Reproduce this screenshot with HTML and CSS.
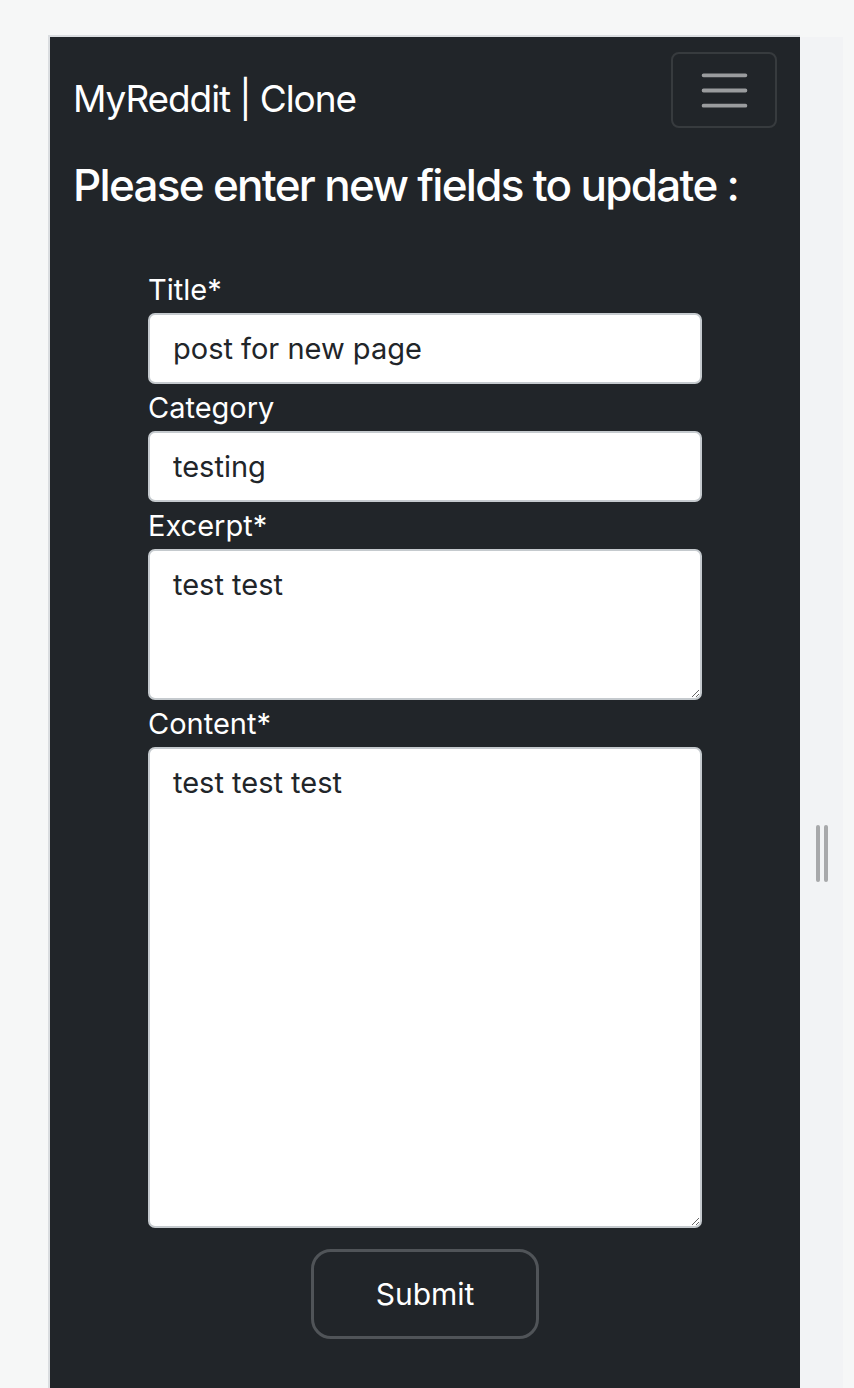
FILE: index.html
```html
<!DOCTYPE html>
<html lang="en">
<head>
    <title>MyReddit | Clone</title>
    <meta charset="utf-8">
    <meta name="viewport" content="width=device-width,initial-scale=1.0">
    <link rel="stylesheet" href="styles.css">
</head>
<body>
<div class="stage">
    <div class="viewport">
        <nav class="navbar">
            <a class="brand" href="#">MyReddit | Clone</a>
            <button class="toggler" type="button">
                <svg class="toggler-icon" viewBox="0 0 30 30" width="57" height="57">
                    <path d="M4 7h22M4 15h22M4 23h22" stroke="rgba(255,255,255,0.55)" stroke-width="2" stroke-linecap="round" fill="none"/>
                </svg>
            </button>
        </nav>
        <div class="content">
            <h3 class="page-title">Please enter new fields to update :</h3>
            <form class="edit-form">
                <label class="form-label">Title*</label>
                <input class="form-control" type="text" value="post for new page">
                <label class="form-label">Category</label>
                <input class="form-control" type="text" value="testing">
                <label class="form-label">Excerpt*</label>
                <textarea class="form-control area-excerpt">test test</textarea>
                <label class="form-label">Content*</label>
                <textarea class="form-control area-content">test test test</textarea>
                <div class="actions">
                    <button class="btn-submit" type="button">Submit</button>
                </div>
            </form>
        </div>
    </div>
    <div class="resizer">
        <span class="grip"></span>
        <span class="grip"></span>
    </div>
</div>
</body>
</html>
```

FILE: styles.css
```css
html, body {
    margin: 0;
    height: 100%;
    overflow: hidden;
}
body {
    background: #f6f7f7;
    font-family: Inter, "Noto Sans", sans-serif;
}
.stage {
    display: flex;
    align-items: flex-start;
    padding: 35px 0 0 48px;
}
.viewport {
    width: 750px;
    height: 1400px;
    background: #212529;
    border-top: 2px solid #dadde0;
    border-left: 2px solid #dadde0;
    color: #fff;
}
.navbar {
    display: flex;
    justify-content: space-between;
    align-items: flex-start;
    padding: 15px 23px;
}
.brand {
    margin-top: 19px;
    font-size: 37px;
    line-height: 55px;
    letter-spacing: -1.1px;
    color: #fff;
    text-decoration: none;
}
.toggler {
    display: flex;
    align-items: center;
    justify-content: center;
    box-sizing: border-box;
    width: 106px;
    height: 76px;
    padding: 0;
    background: transparent;
    border: 2px solid rgba(255, 255, 255, 0.1);
    border-radius: 8px;
}
.toggler-icon {
    display: block;
}
.content {
    padding: 0 23px;
}
.page-title {
    margin: 16px 0 0;
    font-size: 44px;
    line-height: 53px;
    font-weight: 500;
    letter-spacing: -1.7px;
}
.edit-form {
    width: 554px;
    margin: 54px auto 0;
}
.form-label {
    display: block;
    font-size: 29px;
    line-height: 47px;
    letter-spacing: 0;
}
.form-control {
    display: block;
    box-sizing: border-box;
    width: 100%;
    margin: 0;
    padding: 12px 23px;
    font-family: inherit;
    font-size: 29px;
    line-height: 43px;
    letter-spacing: 0;
    color: #212529;
    background: #fff;
    border: 2px solid #c5cace;
    border-radius: 7px;
    outline: none;
}
input.form-control {
    height: 71px;
}
.area-excerpt {
    height: 151px;
    resize: vertical;
}
.area-content {
    height: 481px;
    resize: vertical;
}
.actions {
    display: flex;
    justify-content: center;
    margin-top: 21px;
}
.btn-submit {
    box-sizing: border-box;
    width: 228px;
    height: 90px;
    font-family: inherit;
    font-size: 30px;
    color: #fff;
    background: transparent;
    border: 3px solid #505458;
    border-radius: 20px;
}
.resizer {
    display: flex;
    justify-content: center;
    gap: 4px;
    box-sizing: border-box;
    width: 43px;
    height: 1400px;
    margin-top: 2px;
    padding-top: 788px;
    background: #f2f3f5;
}
.grip {
    width: 4px;
    height: 57px;
    background: #a8a9ab;
    border-radius: 2px;
}
```
